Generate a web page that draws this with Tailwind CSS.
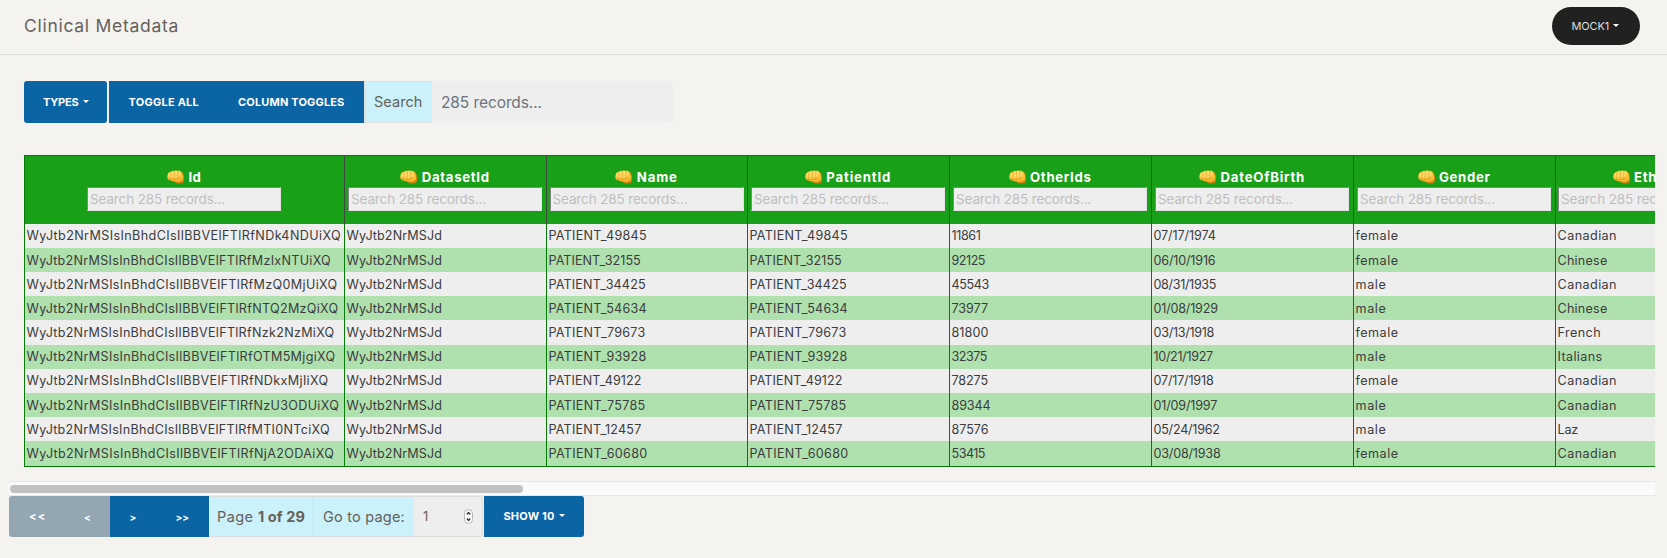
<!DOCTYPE html>
<html lang="en">
<head>
<meta charset="utf-8">
<title>Clinical Metadata</title>
<script src="https://cdn.jsdelivr.net/npm/@tailwindcss/browser@4"></script>
</head>
<body class="h-[558px] overflow-hidden bg-[#f4f3ef] font-['Inter','Liberation_Sans',sans-serif] text-[#66615b]">
<svg class="hidden">
  <symbol id="fist" viewBox="0 0 18 14">
    <path d="M13 1.6 15.8 2.2C17.2 4.6 18 7.6 17.5 10.4L16.6 12.8 12 13.8 8.6 13Z" fill="#d4860c"/>
    <path d="M.5 5C.9 3 2.2 1.6 3.9 1.7 4.8.7 6.4.3 7.6.7 8.8.1 10.2.1 11.2.7 12.8.4 14.4 1 15.2 2.4 16.4 4.6 17 7.4 16.2 9.4 15 11.8 12.6 12.6 9.8 12L5.2 11C2.6 10.8 1 10 .5 8.4.1 7.2.2 6 .5 5Z" fill="#fbc037"/>
    <path d="M1.2 4.8C1.8 3 3 2.3 4.1 2.5 5 1.3 6.6 1 7.8 1.4 9 .8 10.2.9 11.2 1.5 12.6 1.3 13.8 1.9 14.2 3.4L13.6 6.4 9 7.6 1.6 7.6Z" fill="#ffd865"/>
    <path d="M4.2 3 3.7 9M7.7 2 7.3 9M11.2 2.2 11 8" fill="none" stroke="#e0a024" stroke-width=".7" stroke-linecap="round"/>
    <path d="M1 8.8C3 10 5.4 9.4 7.6 9.8 10 10 12 9 13.6 7.4" fill="none" stroke="#d9920f" stroke-width=".7" stroke-linecap="round"/>
    <path d="M7 11.6C10 12.6 13 12 14.6 9.2" fill="none" stroke="#e39a13" stroke-width=".8"/>
  </symbol>
  <symbol id="caret" viewBox="0 0 6 3"><path d="M0 0H6L3 3Z" fill="currentColor"/></symbol>
</svg>

<header class="flex h-[55px] items-start justify-between border-b border-[#dddddd] pl-6 pr-[27px]">
  <h1 class="pt-[14px] text-[17.5px] leading-6"><span data-w="155">Clinical Metadata</span></h1>
  <button class="mt-[7px] flex h-[38px] w-[88px] items-center gap-1 rounded-full bg-[#212120] pl-[19.5px] text-[11px] leading-none text-[#dddddd]">
    <span data-w="37.5">MOCK1</span><svg class="mb-[1px] h-[3px] w-[6px] text-white"><use href="#caret"/></svg>
  </button>
</header>

<main>
  <div class="flex h-[42px] mt-[26px] ml-6 text-[11px] font-bold leading-none text-white">
    <button class="mr-[2px] flex w-[83px] items-center gap-1 rounded-[3px] bg-[#0b64a3] pl-[19px]"><span data-w="35.5">TYPES</span><svg class="mb-[2px] h-[3px] w-[6px]"><use href="#caret"/></svg></button>
    <button class="flex w-[110px] items-center bg-[#0b64a3] pl-[19.5px]"><span data-w="70.5">TOGGLE ALL</span></button>
    <button class="flex w-[145px] items-center bg-[#0b64a3] pl-[19px]"><span data-w="106.5">COLUMN TOGGLES</span></button>
    <div class="flex w-[68px] items-center border border-r-0 border-[#dddddd] bg-[#cbf1fa] pl-[9px] text-[14.5px] font-normal text-[#66615b]"><span data-w="48.5">Search</span></div>
    <div class="flex w-[241px] items-center rounded-r bg-[#eeeeee] pl-[9px] pt-px text-[15.5px] font-normal text-[#6c757d]"><span data-w="101">285 records...</span></div>
  </div>

  <div class="mt-8 ml-[9px] h-[326px] w-[1646px] overflow-hidden pl-[15px]">
    <div id="table" class="w-[1733px] border border-[#087a08] text-[12.6px] leading-6 text-[#3c3c3c]"></div>
  </div>

  <div class="ml-[9px] h-[15px] w-[1646px] border-y border-[#e8e8e8] bg-[#fafafa] pt-[3px] pl-px">
    <div class="h-2 w-[513px] rounded-full bg-[#c1c1c1]"></div>
  </div>

  <div class="ml-[9px] flex h-[41px] text-[11px] font-bold leading-none text-white">
    <button class="flex w-[55px] items-center rounded-l-[3px] bg-[#94a6b2] pl-5"><span data-w="15.5">&lt; &lt;</span></button>
    <button class="flex w-[46px] items-center bg-[#94a6b2] pl-5 text-[10px]"><span>&lt;</span></button>
    <button class="flex w-[46px] items-center bg-[#0b64a3] pl-[19.5px] text-[10px]"><span>&gt;</span></button>
    <button class="flex w-[53px] items-center bg-[#0b64a3] pl-[19.5px] text-[10px]"><span data-w="13.5">&gt;&gt;</span></button>
    <div class="flex w-[105px] items-center whitespace-pre border-y border-r border-[#dddddd] bg-[#cbf1fa] pl-[8px] pt-px text-[14.5px] font-normal text-[#66615b]"><span data-w="41">Page </span><span class="font-bold" data-w="47">1 of 29</span></div>
    <div class="flex w-[100px] items-center border-y border-[#dddddd] bg-[#cbf1fa] pl-[9px] pt-px text-[14.5px] font-normal text-[#66615b]"><span data-w="82">Go to page:</span></div>
    <div class="mr-px flex w-[69px] items-center justify-between rounded-r-[3px] border-y border-r border-[#dddddd] bg-[#eeeeee] pl-[9px] pr-[9px] text-[13px] font-normal text-[#66615b]">
      <span>1</span>
      <svg class="h-[15px] w-[9px]" viewBox="0 0 9 15"><rect x=".5" y=".5" width="8" height="14" rx="4" fill="#fff" stroke="#b5b5b5"/><path d="M2.8 5.5 4.5 3.5 6.2 5.5M2.8 9.5 4.5 11.5 6.2 9.5" fill="none" stroke="#333" stroke-width="1.3"/></svg>
    </div>
    <button class="flex w-[100px] items-center gap-1 rounded-r-[3px] bg-[#0b64a3] pl-[19.5px]"><span data-w="51">SHOW 10</span><svg class="mb-[2px] h-[3px] w-[6px]"><use href="#caret"/></svg></button>
  </div>
</main>

<script>
const columns = [["Id",12.5],["DatasetId",68],["Name",41],["PatientId",65],["OtherIds",61.5],["DateOfBirth",84.5],["Gender",51.5],["Ethnicity",63.5]];
const cellWidths = ["w-[320px]","w-[202px]","w-[201px]","w-[202px]","w-[202px]","w-[202px]","w-[202px]","w-[200px]"];
const prefix = "WyJtb2NrMSIsInBhdCIsIlBBVElFTlRf";
const textWidths = {female:43, male:31, Canadian:59.5, Chinese:50, French:43.5, Italians:45, Laz:20.5};
// id suffix, id width, patient number, width, other id, width, birth date, width, gender, ethnicity
const rows = [
 ["NDk4NDUiXQ",314.5,"49845",98.3,"11861",29,"07/17/1974",62.3,"female","Canadian"],
 ["MzIxNTUiXQ",304.5,"32155",92.3,"92125",33.5,"06/10/1916",62,"female","Chinese"],
 ["MzQ0MjUiXQ",311,"34425",97.3,"45543",37.3,"08/31/1935",62.6,"male","Canadian"],
 ["NTQ2MzQiXQ",312,"54634",98.3,"73977",36.5,"01/08/1929",64.3,"male","Chinese"],
 ["Nzk2NzMiXQ",308,"79673",97,"81800",37,"03/13/1918",60.6,"female","French"],
 ["OTM5MjgiXQ",309,"93928",98,"32375",35.5,"10/21/1927",59.3,"male","Italians"],
 ["NDkxMjIiXQ",302,"49122",93,"78275",36.5,"07/17/1918",60,"female","Canadian"],
 ["NzU3ODUiXQ",312.7,"75785",97,"89344",39,"01/09/1997",63.6,"male","Canadian"],
 ["MTI0NTciXQ",303.3,"12457",93,"87576",37,"05/24/1962",66.3,"male","Laz"],
 ["NjA2ODAiXQ",307.7,"60680",99,"53415",33.5,"03/08/1938",67,"female","Canadian"]
];
let html = '<div class="flex h-[68px] bg-[#18a018]">' + columns.map(([name,w],i) =>
 `<div class="${cellWidths[i]} flex shrink-0 flex-col items-center border-r border-[#3d4a3d] pr-px pt-[10px]">
   <div class="flex h-[21px] items-center gap-1 text-[13.2px] font-bold leading-none text-white"><svg class="h-[14px] w-[17.5px]"><use href="#fist"/></svg><span class="pt-[3px]" data-w="${w}">${name}</span></div>
   <div class="flex h-6 w-[194px] items-center border border-t-[#858585] border-l-[#858585] border-r-[#e2e2e2] border-b-[#e2e2e2] bg-[#eeeeee] pl-[2px] pt-[2px] text-[13.5px] leading-none text-[#bfbfbf]"><span data-w="135">Search 285 records...</span></div>
 </div>`).join('') + '</div>';
rows.forEach((r,n) => {
  const cells = [[prefix+r[0],r[1]],["WyJtb2NrMSJd",95.7],["PATIENT_"+r[2],r[3]],["PATIENT_"+r[2],r[3]],[r[4],r[5]],[r[6],r[7]],[r[8],textWidths[r[8]]],[r[9],textWidths[r[9]]]];
  const height = n % 5 === 4 ? "h-[25px]" : "h-6";
  const pad = n === 0 || n === 5 || n === 6 ? "pt-0" : "pt-px";
  html += `<div class="flex ${height} ${n % 2 ? "bg-[#afe1af]" : "bg-[#eeeeee]"}">` + cells.map(([t,w],i) =>
   `<div class="${cellWidths[i]} ${pad} h-full shrink-0 whitespace-nowrap border-r border-[#087a08] pl-[1.5px] leading-[23px]"><span data-w="${w}">${t}</span></div>`).join('') + '</div>';
});
document.getElementById('table').innerHTML = html;
// Spread each label evenly over its set width, again whenever fonts or styles settle.
function fit() {
  const labels = [...document.querySelectorAll('[data-w]')];
  labels.forEach(el => { el.style.letterSpacing = '0px'; });
  const widths = labels.map(el => el.getBoundingClientRect().width);
  labels.forEach((el, i) => { el.style.letterSpacing = (el.dataset.w - widths[i]) / el.textContent.length + 'px'; });
}
fit();
addEventListener('load', fit);
document.fonts.ready.then(fit);
new ResizeObserver(fit).observe(document.body);
requestAnimationFrame(() => requestAnimationFrame(fit));
setTimeout(fit, 100);
</script>
</body>
</html>
